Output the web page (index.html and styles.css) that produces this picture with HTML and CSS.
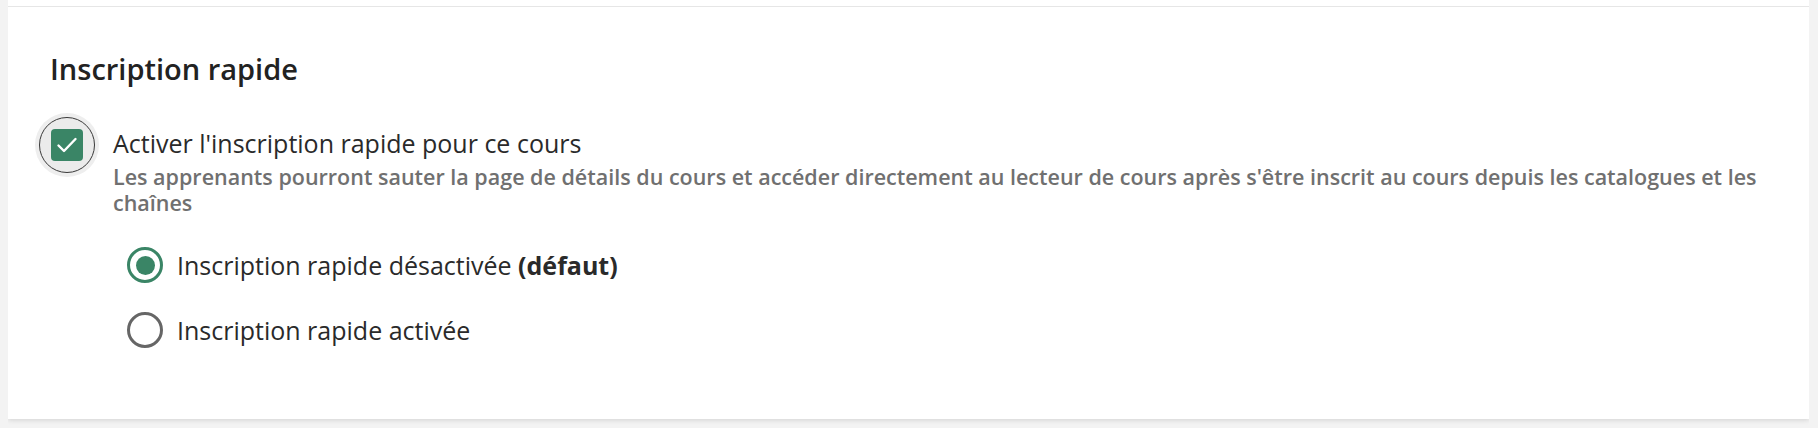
FILE: index.html
```html
<!DOCTYPE html>
<html lang="fr">
<head>
<meta charset="utf-8">
<title>Inscription rapide</title>
<link rel="stylesheet" href="styles.css">
</head>
<body>
<div class="card">
  <div class="card-top"></div>
  <section class="section">
    <h2 class="heading">Inscription rapide</h2>
    <div class="check-row">
      <span class="checkbox" role="checkbox" aria-checked="true">
        <span class="checkbox-box">
          <svg class="check-icon" viewBox="0 0 32 32" width="32" height="32" aria-hidden="true">
            <polyline points="7.5,16.5 13,22 24.5,10" fill="none" stroke="#ffffff" stroke-width="2.4" stroke-linecap="round" stroke-linejoin="round"/>
          </svg>
        </span>
      </span>
      <div class="check-text">
        <div class="check-label">Activer l'inscription rapide pour ce cours</div>
        <div class="check-desc">Les apprenants pourront sauter la page de détails du cours et accéder directement au lecteur de cours après s'être inscrit au cours depuis les catalogues et les chaînes</div>
        <div class="radios">
          <div class="radio-row">
            <span class="radio radio-on"><span class="radio-dot"></span></span>
            <span class="radio-label">Inscription rapide désactivée <b>(défaut)</b></span>
          </div>
          <div class="radio-row">
            <span class="radio"></span>
            <span class="radio-label">Inscription rapide activée</span>
          </div>
        </div>
      </div>
    </div>
  </section>
</div>
</body>
</html>
```
FILE: styles.css
```css
html, body {
  height: 100%;
}
body {
  margin: 0 9px 9px 8px;
  background: #f3f3f3;
  font-family: "Open Sans", "Noto Sans", "Liberation Sans", sans-serif;
  overflow: hidden;
}
.card {
  background: #ffffff;
  height: 419px;
  box-sizing: border-box;
  box-shadow: 0 1px 5px rgba(0, 0, 0, 0.14);
}
.card-top {
  height: 6px;
}
.section {
  border-top: 1px solid #e6e6e6;
  padding: 42px 42px 0 42px;
}
.heading {
  margin: 0;
  font-size: 29px;
  line-height: 40px;
  font-weight: 600;
  color: #222222;
}
.check-row {
  display: flex;
  align-items: flex-start;
  gap: 30px;
  margin-top: 37px;
}
.checkbox {
  position: relative;
  flex: none;
  width: 32px;
  height: 32px;
  margin-top: 3px;
  margin-left: 1px;
}
.checkbox::before {
  content: "";
  position: absolute;
  left: 50%;
  top: 50%;
  width: 54px;
  height: 54px;
  margin: -28px 0 0 -28px;
  border-radius: 50%;
  border: 1px solid #3a3a3a;
  background: #ebebeb;
  box-shadow: 0 0 0 4px #eeeeee;
}
.checkbox-box {
  position: relative;
  width: 32px;
  height: 32px;
  border-radius: 4px;
  background: #3a8566;
  display: flex;
  align-items: center;
  justify-content: center;
}
.check-text {
  flex: 1;
  min-width: 0;
}
.check-label {
  font-size: 25px;
  line-height: 34px;
  color: #2a2a2a;
}
.check-desc {
  margin-top: 4px;
  font-size: 21.5px;
  line-height: 26px;
  font-weight: 600;
  color: #707070;
}
.radios {
  display: flex;
  flex-direction: column;
  gap: 29px;
  margin-top: 31px;
  margin-left: 14px;
}
.radio-row {
  display: flex;
  align-items: center;
  gap: 14px;
  height: 36px;
}
.radio {
  flex: none;
  width: 36px;
  height: 36px;
  box-sizing: border-box;
  border-radius: 50%;
  border: 3.5px solid #666666;
  background: #ffffff;
  display: flex;
  align-items: center;
  justify-content: center;
}
.radio-on {
  border-color: #3a8566;
}
.radio-dot {
  width: 19px;
  height: 19px;
  border-radius: 50%;
  background: #3a8566;
}
.radio-label {
  font-size: 25px;
  line-height: 36px;
  color: #2a2a2a;
}
.radio-label b {
  font-weight: 700;
}
```
